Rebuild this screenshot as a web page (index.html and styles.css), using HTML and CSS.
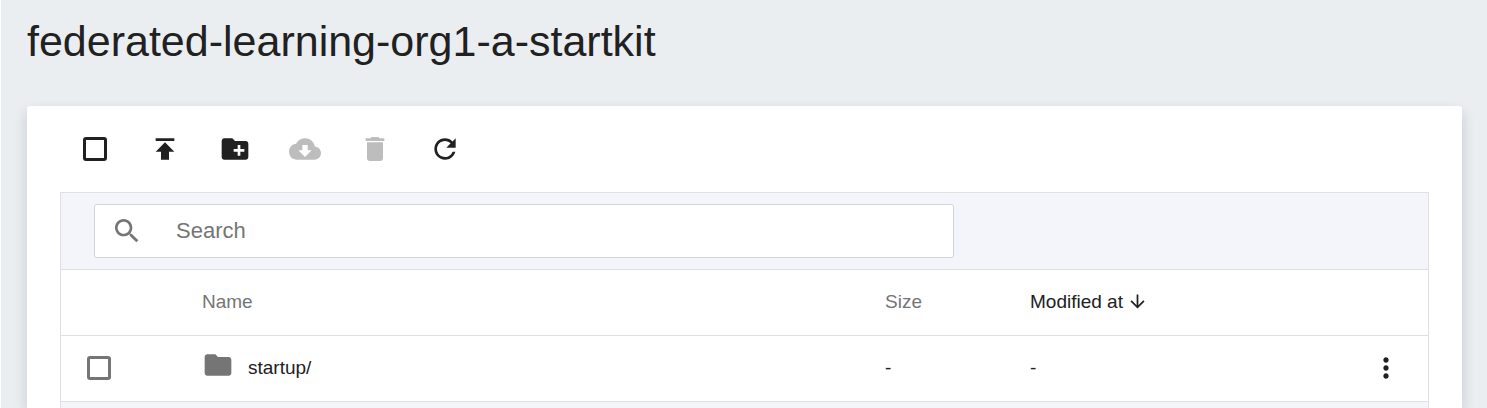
FILE: index.html
```html
<!DOCTYPE html>
<html lang="en">
<head>
<meta charset="utf-8">
<title>federated-learning-org1-a-startkit</title>
<link rel="stylesheet" href="styles.css">
</head>
<body>
<main class="page">
  <h1 class="title">federated-learning-org1-a-startkit</h1>
  <section class="card">
    <div class="toolbar">
      <span class="check-slot"><input class="check" type="checkbox" aria-label="Select all"></span>
      <button class="icon-button" type="button" aria-label="Upload"><svg class="icon" viewBox="0 0 24 24"><path d="M5 4v2h14V4H5zm0 10h4v6h6v-6h4l-7-7-7 7z"/></svg></button>
      <button class="icon-button" type="button" aria-label="New folder"><svg class="icon" viewBox="0 0 24 24"><path d="M20 6h-8l-2-2H4c-1.11 0-1.99.89-1.99 2L2 18c0 1.11.89 2 2 2h16c1.11 0 2-.89 2-2V8c0-1.11-.89-2-2-2zm-1 8h-3v3h-2v-3h-3v-2h3V9h2v3h3v2z"/></svg></button>
      <button class="icon-button" type="button" aria-label="Download" disabled><svg class="icon" viewBox="0 0 24 24"><path d="M19.35 10.04C18.67 6.59 15.64 4 12 4 9.11 4 6.6 5.64 5.35 8.04 2.34 8.36 0 10.91 0 14c0 3.31 2.69 6 6 6h13c2.76 0 5-2.24 5-5 0-2.64-2.05-4.78-4.65-4.96zM17 13l-5 5-5-5h3V9h4v4h3z"/></svg></button>
      <button class="icon-button" type="button" aria-label="Delete" disabled><svg class="icon" viewBox="0 0 24 24"><path d="M6 19c0 1.1.9 2 2 2h8c1.1 0 2-.9 2-2V7H6v12zM19 4h-3.5l-1-1h-5l-1 1H5v2h14V4z"/></svg></button>
      <button class="icon-button" type="button" aria-label="Refresh"><svg class="icon" viewBox="0 0 24 24"><path d="M17.65 6.35C16.2 4.9 14.21 4 12 4c-4.42 0-7.99 3.58-7.99 8s3.57 8 7.99 8c3.73 0 6.84-2.55 7.73-6h-2.08c-.82 2.33-3.04 4-5.65 4-3.31 0-6-2.69-6-6s2.69-6 6-6c1.66 0 3.14.69 4.22 1.78L13 11h7V4l-2.35 2.35z"/></svg></button>
    </div>
    <div class="browser">
      <div class="search-bar">
        <label class="search">
          <svg class="icon" viewBox="0 0 24 24"><path d="M15.5 14h-.79l-.28-.27C15.41 12.59 16 11.11 16 9.5 16 5.91 13.09 3 9.5 3S3 5.91 3 9.5 5.91 16 9.5 16c1.61 0 3.09-.59 4.23-1.57l.27.28v.79l5 4.99L20.49 19l-4.99-5zm-6 0C7.01 14 5 11.99 5 9.5S7.01 5 9.5 5 14 7.01 14 9.5 11.99 14 9.5 14z"/></svg>
          <input class="search-input" type="text" placeholder="Search" aria-label="Search">
        </label>
      </div>
      <table class="files">
        <colgroup><col class="col-check"><col><col class="col-size"><col class="col-modified"><col class="col-menu"></colgroup>
        <thead>
          <tr>
            <th></th>
            <th>Name</th>
            <th>Size</th>
            <th><button class="sort" type="button">Modified at<svg class="sort-icon" viewBox="0 0 24 24"><path d="M20 12l-1.41-1.41L13 16.17V4h-2v12.17l-5.58-5.59L4 12l8 8 8-8z"/></svg></button></th>
            <th></th>
          </tr>
        </thead>
        <tbody>
          <tr>
            <td><span class="check-slot row-check"><input class="check" type="checkbox" aria-label="Select startup/"></span></td>
            <td><a class="file" href="#"><svg class="icon folder" viewBox="0 0 24 24"><path d="M10 4H4c-1.1 0-1.99.9-1.99 2L2 18c0 1.1.9 2 2 2h16c1.1 0 2-.9 2-2V8c0-1.1-.9-2-2-2h-8l-2-2z"/></svg>startup/</a></td>
            <td>-</td>
            <td>-</td>
            <td><button class="icon-button menu" type="button" aria-label="More actions"><svg class="icon" viewBox="0 0 24 24"><path d="M12 8c1.1 0 2-.9 2-2s-.9-2-2-2-2 .9-2 2 .9 2 2 2zm0 2c-1.1 0-2 .9-2 2s.9 2 2 2 2-.9 2-2-.9-2-2-2zm0 6c-1.1 0-2 .9-2 2s.9 2 2 2 2-.9 2-2-.9-2-2-2z"/></svg></button></td>
          </tr>
        </tbody>
      </table>
      <div class="footer"></div>
    </div>
  </section>
</main>
</body>
</html>
```
FILE: styles.css
```css
* {
  box-sizing: border-box;
}

body {
  margin: 0;
  font-family: "Liberation Sans", Arial, sans-serif;
  font-size: 19px;
  color: #212121;
  background: #fff;
}

.page {
  display: flex;
  flex-direction: column;
  min-height: 100vh;
  margin-left: 1px;
  padding: 17px 25px 0 26px;
  background: #eaeef1;
}

.title {
  margin: 0 0 41px;
  font-size: 43px;
  line-height: 48px;
  font-weight: 400;
}

.card {
  flex: 1;
  display: flex;
  flex-direction: column;
  padding: 27px 33px 0;
  background: #fff;
  border-radius: 3px 3px 0 0;
  box-shadow: 0 6px 14px rgba(0, 20, 30, 0.16);
}

.toolbar {
  display: flex;
  gap: 38px;
  padding: 0 19px 27px;
}

.icon {
  display: block;
  flex: none;
  width: 32px;
  height: 32px;
  fill: currentColor;
}

.icon-button {
  display: block;
  padding: 0;
  border: 0;
  background: none;
  color: #212121;
}

.icon-button:disabled {
  color: #bdbdbd;
}

.check-slot {
  display: flex;
  align-items: center;
  justify-content: center;
  width: 32px;
  height: 32px;
}

.check {
  appearance: none;
  width: 24px;
  height: 24px;
  margin: 0;
  border: 3px solid #212121;
  border-radius: 3px;
}

.row-check {
  margin-left: 22px;
}

.row-check .check {
  border-color: #757575;
}

.browser {
  flex: 1;
  display: flex;
  flex-direction: column;
  border: 1px solid #e0e0e0;
  border-bottom: 0;
}

.search-bar {
  padding: 11px 33px;
  background: #f4f5fa;
  border-bottom: 1px solid #e0e0e0;
}

.search {
  display: flex;
  align-items: center;
  gap: 33px;
  max-width: 860px;
  height: 54px;
  padding: 0 16px;
  border: 1px solid #d4d5d9;
  border-radius: 3px;
  background: #fff;
  color: #757575;
}

.search-input {
  flex: 1;
  min-width: 0;
  padding: 0;
  border: 0;
  outline: 0;
  background: none;
  font: inherit;
  font-size: 22px;
  color: #212121;
}

.search-input::placeholder {
  color: #757575;
}

.files {
  width: 100%;
  table-layout: fixed;
  border-collapse: separate;
  border-spacing: 0;
}

.col-check {
  width: 141px;
}

.col-size {
  width: 145px;
}

.col-modified {
  width: 314px;
}

.col-menu {
  width: 84px;
}

.files th,
.files td {
  height: 66px;
  padding: 0 0 2px;
  border-bottom: 1px solid #e0e0e0;
  text-align: left;
  vertical-align: middle;
}

.files th {
  font-weight: 400;
  color: #757575;
}

.sort {
  display: flex;
  align-items: center;
  gap: 4px;
  padding: 0;
  border: 0;
  background: none;
  font: inherit;
  color: #212121;
}

.sort-icon {
  width: 21px;
  height: 21px;
  fill: currentColor;
}

.file {
  display: flex;
  align-items: center;
  gap: 14px;
  color: inherit;
  text-decoration: none;
}

.folder {
  margin-bottom: 6px;
  color: #757575;
}

.menu {
  margin: 0 auto;
}

.footer {
  flex: 1;
  background: #f4f5fa;
}
```
